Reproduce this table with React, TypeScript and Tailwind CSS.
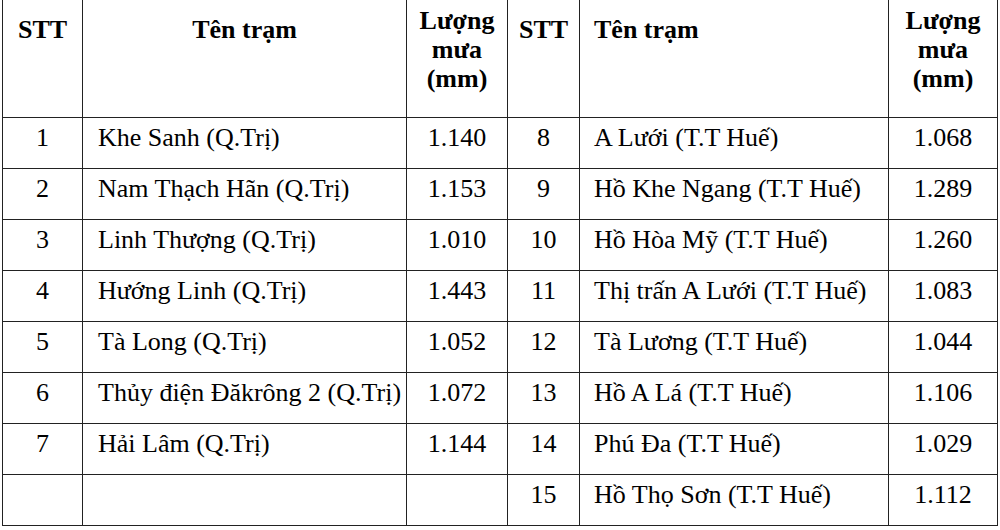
import React from "react";

const left = [
  ["1", "Khe Sanh (Q.Trị)", "1.140"],
  ["2", "Nam Thạch Hãn (Q.Trị)", "1.153"],
  ["3", "Linh Thượng (Q.Trị)", "1.010"],
  ["4", "Hướng Linh (Q.Trị)", "1.443"],
  ["5", "Tà Long (Q.Trị)", "1.052"],
  ["6", "Thủy điện Đăkrông 2 (Q.Trị)", "1.072"],
  ["7", "Hải Lâm (Q.Trị)", "1.144"],
  ["", "", ""],
];

const right = [
  ["8", "A Lưới (T.T Huế)", "1.068"],
  ["9", "Hồ Khe Ngang (T.T Huế)", "1.289"],
  ["10", "Hồ Hòa Mỹ (T.T Huế)", "1.260"],
  ["11", "Thị trấn A Lưới (T.T Huế)", "1.083"],
  ["12", "Tà Lương (T.T Huế)", "1.044"],
  ["13", "Hồ A Lá (T.T Huế)", "1.106"],
  ["14", "Phú Đa (T.T Huế)", "1.029"],
  ["15", "Hồ Thọ Sơn (T.T Huế)", "1.112"],
];

const cell = "border border-[#222] align-top";

export default function App() {
  return (
    <div className="w-[1000px] h-[530px] bg-white overflow-hidden pl-[2px] text-black">
      <table className="table-fixed border-collapse w-[995px] [font-family:'Liberation_Serif','Times_New_Roman',serif]">
        <colgroup>
          <col className="w-[80px]" />
          <col className="w-[324px]" />
          <col className="w-[101px]" />
          <col className="w-[72px]" />
          <col className="w-[309px]" />
          <col className="w-[109px]" />
        </colgroup>
        <thead>
          <tr className="h-[117px] text-[26px] font-bold">
            <th className={`${cell} border-t-0 pt-[16px] text-center leading-[28px]`}>STT</th>
            <th className={`${cell} border-t-0 pt-[16px] text-center leading-[28px]`}>Tên trạm</th>
            <th className={`${cell} border-t-0 pt-[6px] text-center leading-[29px]`}>
              Lượng
              <br />
              mưa
              <br />
              (mm)
            </th>
            <th className={`${cell} border-t-0 pt-[16px] text-center leading-[28px]`}>STT</th>
            <th className={`${cell} border-t-0 pt-[16px] pl-[14px] text-left leading-[28px]`}>Tên trạm</th>
            <th className={`${cell} border-t-0 pt-[6px] text-center leading-[29px]`}>
              Lượng
              <br />
              mưa
              <br />
              (mm)
            </th>
          </tr>
        </thead>
        <tbody>
          {left.map((l, i) => {
            const r = right[i];
            return (
              <tr key={i} className="h-[51px] text-[26px] leading-[30px]">
                <td className={`${cell} pt-[5px] text-center`}>{l[0]}</td>
                <td className={`${cell} pt-[5px] pl-[15px] whitespace-nowrap`}>{l[1]}</td>
                <td className={`${cell} pt-[5px] text-center`}>{l[2]}</td>
                <td className={`${cell} pt-[5px] text-center`}>{r[0]}</td>
                <td className={`${cell} pt-[5px] pl-[14px] whitespace-nowrap`}>{r[1]}</td>
                <td className={`${cell} pt-[5px] text-center`}>{r[2]}</td>
              </tr>
            );
          })}
        </tbody>
      </table>
    </div>
  );
}
